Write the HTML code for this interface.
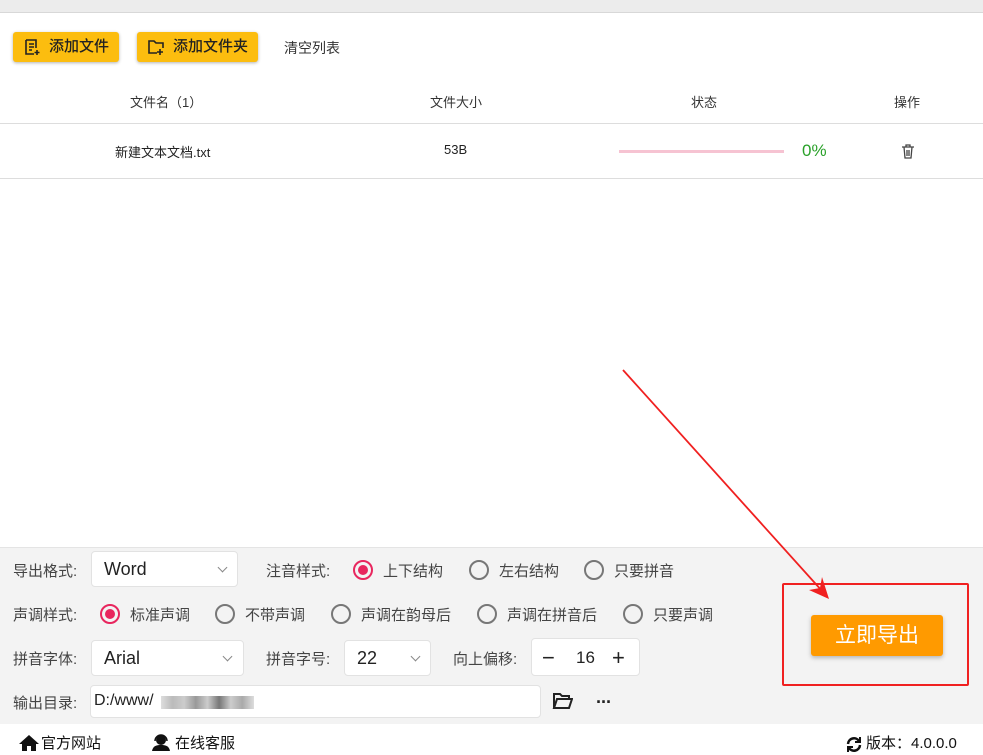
<!DOCTYPE html><html><head><meta charset="utf-8"><style>
*{margin:0;padding:0;box-sizing:border-box}
body{width:983px;height:755px;position:relative;overflow:hidden;background:#fff;font-family:"Liberation Sans","Noto Sans CJK SC",sans-serif;color:#333}
.a{position:absolute;white-space:nowrap}
.btn{position:absolute;background:#fcbd0f;border-radius:3px;box-shadow:0 1px 3px rgba(0,0,0,.3);height:30px;font-size:15px;color:#222;line-height:30px;font-weight:500}
.lab{position:absolute;font-size:15px;color:#444;white-space:nowrap}
.box{position:absolute;background:#fff;border:1px solid #e2e2e2;border-radius:4px;font-size:18px;color:#222}
.r{position:absolute;width:20px;height:20px;border:2px solid #777;border-radius:50%}
.r.on{border-color:#e8265e}.r.on:after{content:"";position:absolute;left:3px;top:3px;width:10px;height:10px;border-radius:50%;background:#e8265e}
.chev{position:absolute;width:7px;height:7px;border-right:1.5px solid #888;border-bottom:1.5px solid #888;transform:rotate(45deg)}
</style></head><body>
<div class="a" style="left:0;top:0;width:983px;height:13px;background:#ececec;border-bottom:1px solid #d8d8d8"></div>
<div class="btn" style="left:13px;top:32px;width:106px"><svg class="a" style="left:10px;top:6px" width="18" height="18" viewBox="0 0 18 18" fill="none" stroke="#222" stroke-width="1.6"><path d="M3 2h10v8M3 2v14h8M6 6h5M6 9h5M6 12h3M14 12v5M11.5 14.5h5"/></svg><span class="a" style="left:36px">添加文件</span></div>
<div class="btn" style="left:137px;top:32px;width:121px"><svg class="a" style="left:10px;top:6px" width="18" height="18" viewBox="0 0 18 18" fill="none" stroke="#222" stroke-width="1.6"><path d="M10 15H2V3h5l2 2h7v5M13 11v6M10 14h6"/></svg><span class="a" style="left:36px">添加文件夹</span></div>
<div class="a" style="left:284px;top:38px;font-size:14px;color:#333">清空列表</div>
<div class="a" style="left:130px;top:92px;font-size:13px">文件名（1）</div>
<div class="a" style="left:430px;top:92px;font-size:13px">文件大小</div>
<div class="a" style="left:691px;top:92px;font-size:13px">状态</div>
<div class="a" style="left:894px;top:92px;font-size:13px">操作</div>
<div class="a" style="left:0;top:123px;width:983px;height:1px;background:#ddd"></div>
<div class="a" style="left:115px;top:142px;font-size:13px;color:#222">新建文本文档.txt</div>
<div class="a" style="left:444px;top:142px;font-size:13px;color:#222">53B</div>
<div class="a" style="left:619px;top:150px;width:165px;height:3px;background:#f6c3d2"></div>
<div class="a" style="left:802px;top:141px;font-size:17px;color:#2aa12a">0%</div>
<svg class="a" style="left:901px;top:144px" width="14" height="15" viewBox="0 0 14 15" fill="none" stroke="#444" stroke-width="1.3"><path d="M1 3h12M5 3V1h4v2M3 3l1 11h6l1-11M6 6v6M8 6v6"/></svg>
<div class="a" style="left:0;top:178px;width:983px;height:1px;background:#ddd"></div>
<div class="a" style="left:0;top:547px;width:983px;height:177px;background:#f3f3f3;border-top:1px solid #e4e4e4"></div>
<div class="lab" style="left:13px;top:560px">导出格式:</div>
<div class="box" style="left:91px;top:551px;width:147px;height:36px"><span class="a" style="left:12px;top:7px">Word</span><i class="chev" style="left:127px;top:12px"></i></div>
<div class="lab" style="left:266px;top:560px">注音样式:</div>
<div class="r on" style="left:353px;top:560px"></div><div class="lab" style="left:383px;top:560px">上下结构</div>
<div class="r" style="left:469px;top:560px"></div><div class="lab" style="left:499px;top:560px">左右结构</div>
<div class="r" style="left:584px;top:560px"></div><div class="lab" style="left:614px;top:560px">只要拼音</div>
<div class="lab" style="left:13px;top:604px">声调样式:</div>
<div class="r on" style="left:100px;top:604px"></div><div class="lab" style="left:130px;top:604px">标准声调</div>
<div class="r" style="left:215px;top:604px"></div><div class="lab" style="left:245px;top:604px">不带声调</div>
<div class="r" style="left:331px;top:604px"></div><div class="lab" style="left:361px;top:604px">声调在韵母后</div>
<div class="r" style="left:477px;top:604px"></div><div class="lab" style="left:507px;top:604px">声调在拼音后</div>
<div class="r" style="left:623px;top:604px"></div><div class="lab" style="left:653px;top:604px">只要声调</div>
<div class="lab" style="left:13px;top:648px">拼音字体:</div>
<div class="box" style="left:91px;top:640px;width:153px;height:36px"><span class="a" style="left:12px;top:7px">Arial</span><i class="chev" style="left:132px;top:12px"></i></div>
<div class="lab" style="left:266px;top:648px">拼音字号:</div>
<div class="box" style="left:344px;top:640px;width:87px;height:36px"><span class="a" style="left:12px;top:7px">22</span><i class="chev" style="left:67px;top:12px"></i></div>
<div class="lab" style="left:453px;top:648px">向上偏移:</div>
<div class="box" style="left:531px;top:638px;width:109px;height:38px"><span class="a" style="left:10px;top:6px;font-size:22px">−</span><span class="a" style="left:44px;top:9px;font-size:17px">16</span><span class="a" style="left:80px;top:6px;font-size:22px">+</span></div>
<div class="lab" style="left:13px;top:692px">输出目录:</div>
<div class="box" style="left:90px;top:685px;width:451px;height:33px"><span class="a" style="left:3px;top:6px;font-size:16px">D:/www/</span><span class="a" style="left:70px;top:10px;width:93px;height:13px;background:linear-gradient(90deg,#ddd,#bbb,#ccc,#999,#ccc,#777,#ccc,#aaa,#ddd)"></span></div>
<svg class="a" style="left:552px;top:692px" width="21" height="18" viewBox="0 0 21 18" fill="none" stroke="#222" stroke-width="2"><path d="M2 16V2h6l2 2h7v3M2 16l3-9h15l-3 9z"/></svg>
<div class="a" style="left:596px;top:692px;font-size:18px;font-weight:bold;color:#222;letter-spacing:-1px">···</div>
<div class="a" style="left:782px;top:583px;width:187px;height:103px;border:2px solid #f02020;border-radius:2px"></div>
<div class="a" style="left:811px;top:615px;width:132px;height:41px;background:#ff9a00;border-radius:3px;box-shadow:0 2px 4px rgba(0,0,0,.25);color:#fff;font-size:21px;text-align:center;line-height:41px">立即导出</div>
<svg class="a" style="left:0;top:0" width="983" height="755"><line x1="623" y1="370" x2="823" y2="592" stroke="#f02020" stroke-width="1.8"/><path d="M829 599l-20-9 11-2 2-11z" fill="#f02020"/></svg>
<svg class="a" style="left:19px;top:735px" width="20" height="16" viewBox="0 0 20 16"><path d="M10 0L0 9h3v7h5v-5h4v5h5V9h3z" fill="#111"/></svg>
<div class="a" style="left:41px;top:732px;font-size:15px;color:#111">官方网站</div>
<svg class="a" style="left:151px;top:734px" width="20" height="17" viewBox="0 0 20 17"><circle cx="10" cy="6" r="5" fill="#111"/><path d="M1 17c1-5 4-6 9-6s8 1 9 6z" fill="#111"/><path d="M4 7a6 6 0 0 1 12 0" stroke="#111" fill="none" stroke-width="1.5"/></svg>
<div class="a" style="left:175px;top:732px;font-size:15px;color:#111">在线客服</div>
<svg class="a" style="left:845px;top:736px" width="18" height="17" viewBox="0 0 18 17" fill="none" stroke="#111" stroke-width="2.5"><path d="M3 8a6 6 0 0 1 11-3M15 9a6 6 0 0 1-11 3"/><path d="M15 1v5h-5M3 16v-5h5" stroke-width="2"/></svg>
<div class="a" style="left:866px;top:732px;font-size:15px;color:#111">版本：4.0.0.0</div>
</body></html>
